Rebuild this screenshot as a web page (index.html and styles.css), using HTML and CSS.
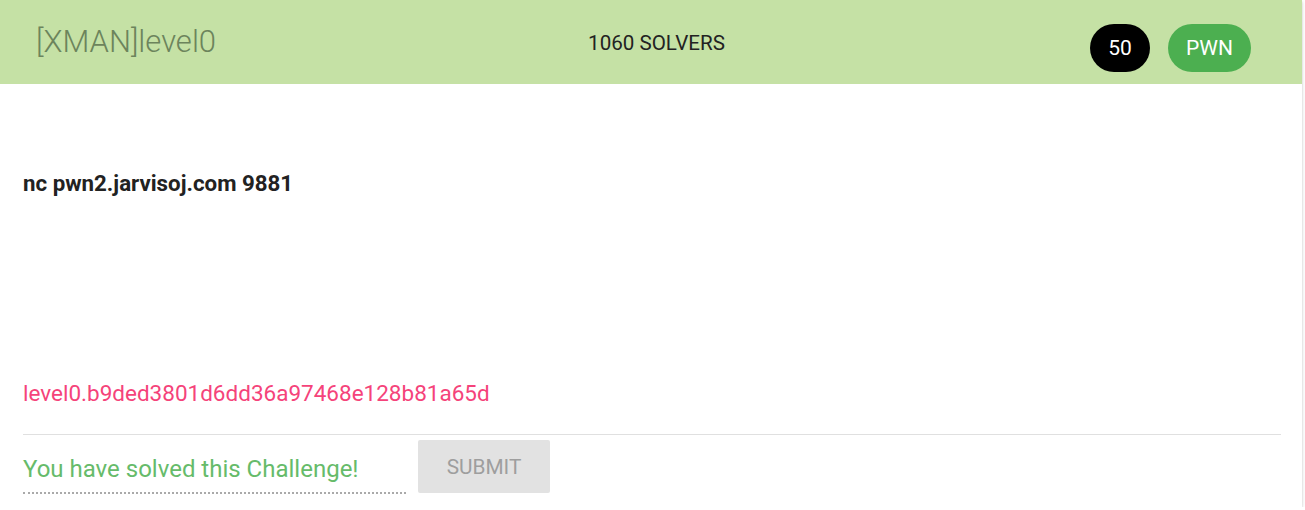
FILE: index.html
```html
<!DOCTYPE html>
<html>
<head>
<meta charset="utf-8">
<link rel="stylesheet" href="styles.css">
</head>
<body>
<div class="card">
  <div class="head">
    <div class="title">[XMAN]level0</div>
    <div class="solvers">1060 SOLVERS</div>
    <div class="badges">
      <span class="pill score">50</span>
      <span class="pill cat">PWN</span>
    </div>
  </div>
  <div class="content">
    <div class="desc">nc pwn2.jarvisoj.com 9881</div>
    <div class="file">level0.b9ded3801d6dd36a97468e128b81a65d</div>
    <div class="divider"></div>
    <div class="form">
      <div class="field">You have solved this Challenge!</div>
      <button class="submit" disabled>SUBMIT</button>
    </div>
  </div>
</div>
</body>
</html>
```

FILE: styles.css
```css
html, body {
  margin: 0;
  padding: 0;
  background: #fff;
  font-family: Roboto, "Liberation Sans", sans-serif;
}
.card {
  width: 1302px;
  height: 507px;
  background: #fff;
  box-shadow: 0 2px 2px 0 rgba(0,0,0,0.14), 0 1px 5px 0 rgba(0,0,0,0.12), 0 3px 1px -2px rgba(0,0,0,0.2);
  overflow: hidden;
}
.head {
  height: 84px;
  background: #c5e1a5;
  display: grid;
  grid-template-columns: 1fr 1fr 1fr;
  align-items: center;
}
.title {
  padding-left: 36px;
  font-size: 31px;
  font-weight: 300;
  color: #6c845c;
  margin-top: -2px;
}
.solvers {
  text-align: center;
  font-size: 20.6px;
  color: #222;
  padding-left: 11px;
  margin-top: 1px;
}
.badges {
  display: flex;
  justify-content: flex-end;
  gap: 18px;
  padding-right: 51px;
  margin-top: 12px;
}
.pill {
  height: 48px;
  border-radius: 24px;
  display: flex;
  align-items: center;
  justify-content: center;
  color: #fff;
  font-size: 21px;
}
.score {
  width: 60px;
  background: #000;
}
.cat {
  width: 83px;
  background: #4caf50;
}
.content {
  padding: 0 21px 0 23px;
}
.desc {
  margin-top: 84px;
  font-size: 22.3px;
  font-weight: 700;
  color: #222;
  line-height: 30px;
}
.file {
  margin-top: 180px;
  font-size: 22.5px;
  color: #f5437a;
  line-height: 30px;
}
.divider {
  margin-top: 26px;
  height: 1px;
  background: #e0e0e0;
}
.form {
  display: flex;
  align-items: flex-start;
  gap: 12px;
  margin-top: 5px;
}
.field {
  width: 383px;
  height: 54px;
  box-sizing: border-box;
  padding-top: 17px;
  font-size: 24px;
  color: #66bb6a;
  border-bottom: 2px dotted #aaa;
  line-height: 24px;
}
.submit {
  width: 132px;
  height: 53px;
  border: none;
  border-radius: 2px;
  background: #e2e2e2;
  color: #9e9e9e;
  font-family: Roboto, "Liberation Sans", sans-serif;
  font-size: 20.8px;
  padding: 0;
}
```
